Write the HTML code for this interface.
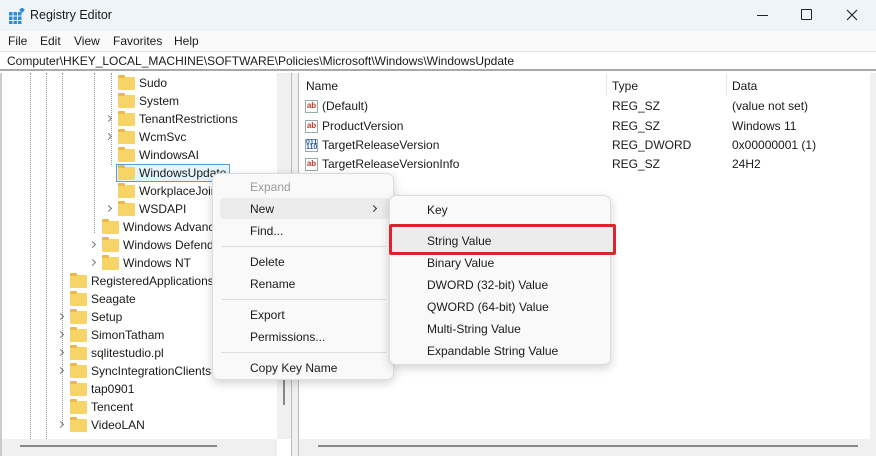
<!DOCTYPE html>
<html><head><style>
*{margin:0;padding:0;box-sizing:border-box}
body{width:876px;height:456px;overflow:hidden;background:#fff;font-family:"Liberation Sans",sans-serif;font-size:12px;color:#1a1a1a;position:relative}
.a{position:absolute;white-space:nowrap}
.fold{position:absolute;width:17px;height:13px;background:#f8d467;border-radius:1px}
.fold:before{content:"";position:absolute;left:0;top:-2px;width:7px;height:3px;background:#e9b949;border-radius:1px 1px 0 0}
.chev{position:absolute;width:5px;height:5px;border-right:1.3px solid #777;border-top:1.3px solid #777;transform:rotate(45deg)}
.ico{position:absolute;width:13px;height:13px;border:1px solid #9aa;background:#fff;font-size:8px;font-weight:bold;color:#c0392b;line-height:10px;text-align:center}
.dot{position:absolute;border-left:1px dotted #999}
</style></head><body>
<div class="a" style="left:0;top:0;width:876px;height:31px;background:#eef4f8"></div>
<svg class="a" style="left:9px;top:8px" width="16" height="16"><g fill="#2d8cd6"><rect x="0" y="4" width="3.5" height="3.5"/><rect x="4.5" y="4" width="3.5" height="3.5"/><rect x="9" y="4" width="3.5" height="3.5"/><rect x="0" y="8.5" width="3.5" height="3.5"/><rect x="4.5" y="8.5" width="3.5" height="3.5"/><rect x="9" y="8.5" width="3.5" height="3.5"/><rect x="0" y="13" width="3.5" height="3"/><rect x="4.5" y="13" width="3.5" height="3"/><rect x="9" y="13" width="3.5" height="3"/><rect x="11" y="0" width="4" height="4" transform="rotate(45 13 2)"/></g></svg>
<div class="a" style="left:30px;top:8px;font-size:12.5px">Registry Editor</div>
<div class="a" style="left:757px;top:15px;width:11px;border-top:1px solid #222"></div>
<div class="a" style="left:801px;top:9px;width:11px;height:11px;border:1px solid #222;border-radius:1px"></div>
<svg class="a" style="left:846px;top:9px" width="12" height="12"><path d="M1 1L11 11M11 1L1 11" stroke="#222" stroke-width="1.2"/></svg>
<div class="a" style="left:0;top:31px;width:876px;height:20px;background:#fafafa"></div>
<div class="a" style="left:8px;top:34px">File</div><div class="a" style="left:40px;top:34px">Edit</div><div class="a" style="left:74px;top:34px">View</div><div class="a" style="left:113px;top:34px">Favorites</div><div class="a" style="left:174px;top:34px">Help</div>
<div class="a" style="left:0;top:51px;width:876px;height:20px;background:#fff;border-top:1px solid #e4e4e4;border-bottom:2px solid #aaa"></div>
<div class="a" style="left:7px;top:54px">Computer\HKEY_LOCAL_MACHINE\SOFTWARE\Policies\Microsoft\Windows\WindowsUpdate</div>
<div class="a" style="left:0;top:73px;width:2px;height:383px;background:#ccc"></div>
<div class="a" style="left:277px;top:73px;width:14px;height:366px;background:#f0f0f0"></div>
<div class="a" style="left:283px;top:375px;width:2px;height:30px;background:#888"></div>
<div class="a" style="left:291px;top:73px;width:8px;height:383px;background:#f0f0f0;border-left:1px solid #bbb;border-right:1px solid #bbb"></div>
<div class="a" style="left:2px;top:439px;width:275px;height:17px;background:#f0f0f0"></div>
<div class="a" style="left:20px;top:445px;width:197px;height:2px;background:#888"></div>
<div class="a" style="left:299px;top:439px;width:577px;height:17px;background:#f0f0f0"></div>
<div class="a" style="left:318px;top:445px;width:540px;height:2px;background:#888"></div>
<div class="a" style="left:870px;top:73px;width:6px;height:366px;background:#f0f0f0"></div>
<div class="dot" style="left:30px;top:73px;height:366px"></div>
<div class="dot" style="left:46px;top:73px;height:366px"></div>
<div class="dot" style="left:62px;top:73px;height:352px"></div>
<div class="dot" style="left:94px;top:73px;height:160px"></div>
<div class="dot" style="left:111px;top:73px;height:92px"></div>
<div class="fold" style="left:118px;top:77px"></div><div class="a" style="left:139px;top:76px">Sudo</div>
<div class="fold" style="left:118px;top:95px"></div><div class="a" style="left:139px;top:94px">System</div>
<div class="chev" style="left:106px;top:116px"></div><div class="fold" style="left:118px;top:113px"></div><div class="a" style="left:139px;top:112px">TenantRestrictions</div>
<div class="chev" style="left:106px;top:134px"></div><div class="fold" style="left:118px;top:131px"></div><div class="a" style="left:139px;top:130px">WcmSvc</div>
<div class="fold" style="left:118px;top:149px"></div><div class="a" style="left:139px;top:148px">WindowsAI</div>
<div class="a" style="left:116px;top:164px;width:114px;height:18px;background:#e5f3fb;border:1px solid #5d9bd0"></div>
<div class="fold" style="left:118px;top:167px"></div><div class="a" style="left:139px;top:166px">WindowsUpdate</div>
<div class="fold" style="left:118px;top:185px"></div><div class="a" style="left:139px;top:184px">WorkplaceJoin</div>
<div class="chev" style="left:106px;top:206px"></div><div class="fold" style="left:118px;top:203px"></div><div class="a" style="left:139px;top:202px">WSDAPI</div>
<div class="fold" style="left:102px;top:221px"></div><div class="a" style="left:123px;top:220px">Windows Advanced</div>
<div class="chev" style="left:90px;top:242px"></div><div class="fold" style="left:102px;top:239px"></div><div class="a" style="left:123px;top:238px">Windows Defender</div>
<div class="chev" style="left:90px;top:260px"></div><div class="fold" style="left:102px;top:257px"></div><div class="a" style="left:123px;top:256px">Windows NT</div>
<div class="fold" style="left:70px;top:275px"></div><div class="a" style="left:91px;top:274px">RegisteredApplications</div>
<div class="fold" style="left:70px;top:293px"></div><div class="a" style="left:91px;top:292px">Seagate</div>
<div class="chev" style="left:58px;top:314px"></div><div class="fold" style="left:70px;top:311px"></div><div class="a" style="left:91px;top:310px">Setup</div>
<div class="chev" style="left:58px;top:332px"></div><div class="fold" style="left:70px;top:329px"></div><div class="a" style="left:91px;top:328px">SimonTatham</div>
<div class="chev" style="left:58px;top:350px"></div><div class="fold" style="left:70px;top:347px"></div><div class="a" style="left:91px;top:346px">sqlitestudio.pl</div>
<div class="chev" style="left:58px;top:368px"></div><div class="fold" style="left:70px;top:365px"></div><div class="a" style="left:91px;top:364px">SyncIntegrationClients</div>
<div class="fold" style="left:70px;top:383px"></div><div class="a" style="left:91px;top:382px">tap0901</div>
<div class="fold" style="left:70px;top:401px"></div><div class="a" style="left:91px;top:400px">Tencent</div>
<div class="chev" style="left:58px;top:422px"></div><div class="fold" style="left:70px;top:419px"></div><div class="a" style="left:91px;top:418px">VideoLAN</div>
<div class="a" style="left:606px;top:74px;height:22px;border-left:1px solid #e5e5e5"></div>
<div class="a" style="left:726px;top:74px;height:22px;border-left:1px solid #e5e5e5"></div>
<div class="a" style="left:306px;top:79px">Name</div><div class="a" style="left:612px;top:79px">Type</div><div class="a" style="left:732px;top:79px">Data</div>
<div class="ico" style="left:305px;top:100px">ab</div><div class="a" style="left:322px;top:99px">(Default)</div><div class="a" style="left:612px;top:99px">REG_SZ</div><div class="a" style="left:732px;top:99px">(value not set)</div>
<div class="ico" style="left:305px;top:120px">ab</div><div class="a" style="left:322px;top:119px">ProductVersion</div><div class="a" style="left:612px;top:119px">REG_SZ</div><div class="a" style="left:732px;top:119px">Windows 11</div>
<div class="ico" style="left:305px;top:139px;color:#2a5ca8;font-size:7px;line-height:5px">011<br>110</div><div class="a" style="left:322px;top:138px">TargetReleaseVersion</div><div class="a" style="left:612px;top:138px">REG_DWORD</div><div class="a" style="left:732px;top:138px">0x00000001 (1)</div>
<div class="ico" style="left:305px;top:158px">ab</div><div class="a" style="left:322px;top:157px">TargetReleaseVersionInfo</div><div class="a" style="left:612px;top:157px">REG_SZ</div><div class="a" style="left:732px;top:157px">24H2</div>
<div class="a" style="left:212px;top:173px;width:182px;height:207px;background:#f9f9f9;border:1px solid #ddd;border-radius:7px;box-shadow:0 3px 10px rgba(0,0,0,.18)"></div>
<div class="a" style="left:220px;top:198px;width:171px;height:21px;background:#ececec;border-radius:4px"></div>
<div class="a" style="left:250px;top:180px;color:#9a9a9a">Expand</div>
<div class="a" style="left:250px;top:202px">New</div><div class="chev" style="left:371px;top:206px;border-color:#333"></div>
<div class="a" style="left:250px;top:224px">Find...</div>
<div class="a" style="left:221px;top:246px;width:165px;border-top:1px solid #ddd"></div>
<div class="a" style="left:250px;top:255px">Delete</div>
<div class="a" style="left:250px;top:277px">Rename</div>
<div class="a" style="left:221px;top:299px;width:165px;border-top:1px solid #ddd"></div>
<div class="a" style="left:250px;top:308px">Export</div>
<div class="a" style="left:250px;top:330px">Permissions...</div>
<div class="a" style="left:221px;top:352px;width:165px;border-top:1px solid #ddd"></div>
<div class="a" style="left:250px;top:361px">Copy Key Name</div>
<div class="a" style="left:389px;top:195px;width:222px;height:170px;background:#f9f9f9;border:1px solid #ddd;border-radius:7px;box-shadow:0 3px 10px rgba(0,0,0,.18)"></div>
<div class="a" style="left:390px;top:226px;width:224px;height:27px;background:#ececec"></div>
<div class="a" style="left:389px;top:224px;width:227px;height:31px;border:3px solid #d9252c;border-radius:2px"></div>
<div class="a" style="left:427px;top:203px">Key</div>
<div class="a" style="left:427px;top:234px">String Value</div>
<div class="a" style="left:427px;top:256px">Binary Value</div>
<div class="a" style="left:427px;top:278px">DWORD (32-bit) Value</div>
<div class="a" style="left:427px;top:300px">QWORD (64-bit) Value</div>
<div class="a" style="left:427px;top:322px">Multi-String Value</div>
<div class="a" style="left:427px;top:344px">Expandable String Value</div>
</body></html>
